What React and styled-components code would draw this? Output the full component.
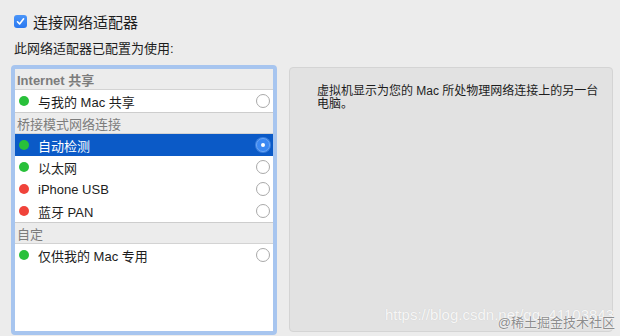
import React from "react";
import styled, { createGlobalStyle } from "styled-components";

const Global = createGlobalStyle`
  html, body { margin: 0; padding: 0; background: #ececec; }
  body { font-family: "Liberation Sans", "Noto Sans CJK SC", sans-serif; color: #222; }
  * { box-sizing: border-box; }
`;

const Page = styled.div`
  position: relative;
  width: 620px;
  height: 336px;
  overflow: hidden;
  background: #ececec;
  display: flex;
  flex-direction: column;
`;

const CheckRow = styled.label`
  display: flex;
  align-items: center;
  gap: 6px;
  margin: 13px 0 0 14px;
  height: 17px;
  font-size: 15px;
  color: #1d1d1d;
`;

const CheckBox = styled.span`
  width: 13px;
  height: 13px;
  border-radius: 3px;
  background: linear-gradient(#4a95f8, #2a78f0);
  display: flex;
  align-items: center;
  justify-content: center;
`;

const Caption = styled.div`
  margin: 11px 0 0 14px;
  font-size: 13px;
  line-height: 16px;
  color: #1d1d1d;
`;

const Main = styled.div`
  display: flex;
  gap: 12px;
  margin: 8px 0 0 11px;
  height: 270px;
`;

const ListBox = styled.div`
  width: 266px;
  height: 270px;
  border: 4px solid #a7c5ef;
  border-radius: 4px;
  background: #fff;
  display: flex;
  flex-direction: column;
`;

const Header = styled.div`
  height: ${(p) => (p.$first ? 21 : 22)}px;
  display: flex;
  align-items: center;
  padding-left: 2px;
  font-size: 13px;
  color: #7c7c7c;
  font-weight: ${(p) => (p.$bold ? 700 : 400)};
  background: #ececec;
  border-top: ${(p) => (p.$first ? "none" : "1px solid #cdcdcd")};
  border-bottom: 1px solid #d3d3d3;
`;

const Row = styled.div`
  height: 22px;
  display: flex;
  align-items: center;
  padding: 0 3px 0 4px;
  font-size: 13px;
  color: ${(p) => (p.$selected ? "#fff" : "#1d1d1d")};
  background: ${(p) => (p.$selected ? "#0b5ac7" : "#fff")};
`;

const Dot = styled.span`
  width: 10px;
  height: 10px;
  border-radius: 50%;
  background: ${(p) => (p.$status === "on" ? "#28c03a" : "#f0433a")};
  flex: none;
`;

const Label = styled.span`
  margin-left: 9px;
  flex: 1;
`;

const Radio = styled.span`
  width: 14px;
  height: 14px;
  border-radius: 50%;
  flex: none;
  display: flex;
  align-items: center;
  justify-content: center;
  border: 1px solid ${(p) => (p.$checked ? "#6aa6f7" : "#a9a9a9")};
  background: ${(p) => (p.$checked ? "#3b88f2" : "#fff")};
  box-shadow: ${(p) => (p.$checked ? "0 0 0 1px rgba(110,165,245,0.5)" : "none")};
  &::after {
    content: "";
    display: ${(p) => (p.$checked ? "block" : "none")};
    width: 4px;
    height: 4px;
    border-radius: 50%;
    background: #fff;
  }
`;

const Panel = styled.div`
  margin-top: 2px;
  width: 324px;
  height: 265px;
  background: #e2e2e2;
  border: 1px solid #d4d4d4;
  border-radius: 4px;
  padding: 17px 0 0 27px;
`;

const PanelText = styled.p`
  margin: 0;
  width: 284px;
  font-size: 12px;
  line-height: 13px;
  color: #1d1d1d;
`;

const WaterUrl = styled.div`
  position: absolute;
  right: 6px;
  bottom: 13px;
  font-size: 15px;
  font-family: "Liberation Sans", sans-serif;
  color: rgba(255, 255, 255, 0.85);
  text-shadow: 0 0 1px rgba(0, 0, 0, 0.12);
`;

const WaterMark = styled.div`
  position: absolute;
  right: 5px;
  bottom: 5px;
  font-size: 13px;
  color: #8d8d8d;
  text-shadow: 0 0 2px #fff, 0 0 1px #fff;
`;

const groups = [
  {
    title: "Internet 共享",
    bold: true,
    items: [{ name: "与我的 Mac 共享", status: "on" }],
  },
  {
    title: "桥接模式网络连接",
    items: [
      { name: "自动检测", status: "on", selected: true },
      { name: "以太网", status: "on" },
      { name: "iPhone USB", status: "off" },
      { name: "蓝牙 PAN", status: "off" },
    ],
  },
  {
    title: "自定",
    items: [{ name: "仅供我的 Mac 专用", status: "on" }],
  },
];

export default function App() {
  return (
    <Page>
      <Global />
      <CheckRow>
        <CheckBox>
          <svg width="9" height="9" viewBox="0 0 9 9">
            <path d="M1.5 4.8 L3.6 7 L7.6 1.8" fill="none" stroke="#fff" strokeWidth="1.6" strokeLinecap="round" strokeLinejoin="round" />
          </svg>
        </CheckBox>
        连接网络适配器
      </CheckRow>
      <Caption>此网络适配器已配置为使用:</Caption>
      <Main>
        <ListBox>
          {groups.map((g, gi) => (
            <React.Fragment key={g.title}>
              <Header $first={gi === 0} $bold={g.bold}>{g.title}</Header>
              {g.items.map((it) => (
                <Row key={it.name} $selected={it.selected}>
                  <Dot $status={it.status} />
                  <Label>{it.name}</Label>
                  <Radio $checked={it.selected} />
                </Row>
              ))}
            </React.Fragment>
          ))}
        </ListBox>
        <Panel>
          <PanelText>虚拟机显示为您的 Mac 所处物理网络连接上的另一台电脑。</PanelText>
        </Panel>
      </Main>
      <WaterUrl>https://blog.csdn.net/qq_41103843</WaterUrl>
      <WaterMark>@稀土掘金技术社区</WaterMark>
    </Page>
  );
}
